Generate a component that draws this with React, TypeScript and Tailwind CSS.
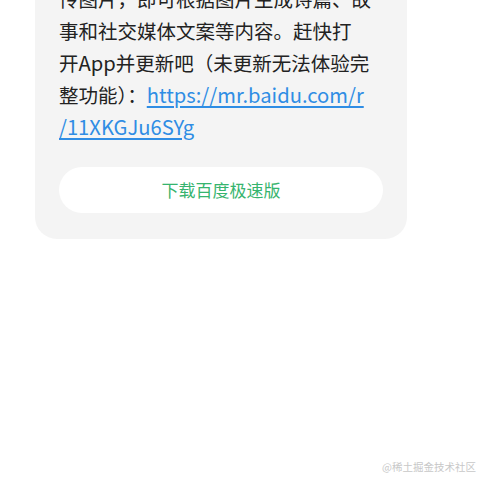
import React from "react";

export default function App() {
  const font = { fontFamily: '"Noto Sans CJK SC", "Noto Sans", sans-serif' };
  return (
    <div className="w-[480px] h-[480px] bg-white overflow-hidden relative" style={font}>
      <div className="ml-[35px] mt-[-41px] w-[372px] bg-[#f4f4f4] rounded-[22px] px-6 pt-[24px] pb-[26px]">
        <div className="text-[19.5px] leading-[32px] text-[#222222] whitespace-nowrap">
          <div className="h-[32px]">传图片，即可根据图片生成诗篇、故</div>
          <div className="h-[32px]">事和社交媒体文案等内容。赶快打</div>
          <div className="h-[32px]">
            开<span className="text-[20.2px] leading-[32px]">App</span>并更新吧（未更新无法体验完
          </div>
          <div className="h-[32px]">
            整功能）：<span className="text-[20.2px] leading-[32px] text-[#2f8de4] underline underline-offset-[3px]">https://mr.baidu.com/r</span>
          </div>
          <div className="h-[32px]">
            <span className="text-[20.2px] leading-[32px] text-[#2f8de4] underline underline-offset-[3px]">/11XKGJu6SYg</span>
          </div>
        </div>
        <div className="mt-6 h-[46px] rounded-full bg-white flex items-center justify-center text-[17px] text-[#36b46e]">
          下载百度极速版
        </div>
      </div>
      <div className="absolute right-[4px] bottom-[5px] text-[10.5px] text-[#c8c8c8]">@稀土掘金技术社区</div>
    </div>
  );
}
